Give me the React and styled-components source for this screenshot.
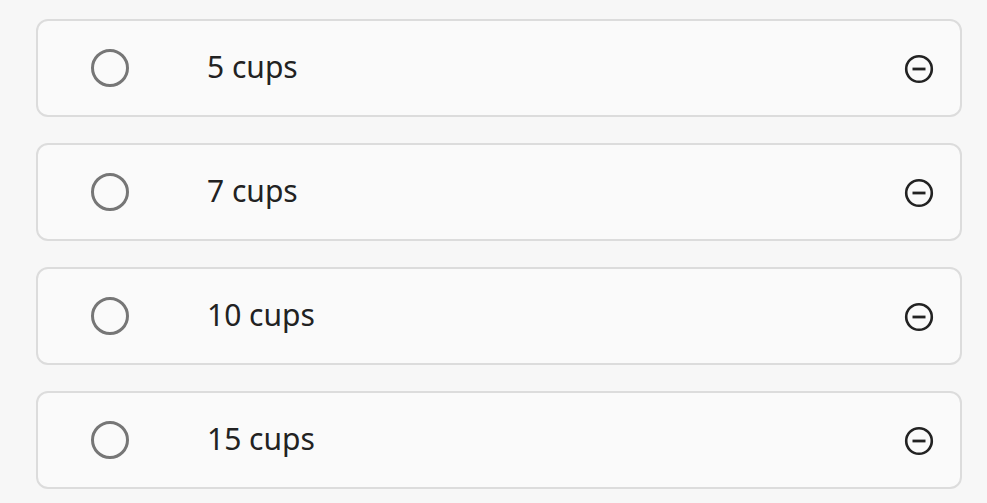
import React from 'react';
import styled, { createGlobalStyle } from 'styled-components';

const options = ['5 cups', '7 cups', '10 cups', '15 cups'];

const GlobalStyle = createGlobalStyle`
    body {
        margin: 0;
        background: #f7f7f7;
        font-family: "Noto Sans", "Open Sans", sans-serif;
    }
`;

const App = () => {
    return (
        <>
            <GlobalStyle />
            <List>
                {options.map(label => (
                    <Card key={label}>
                        <Radio />
                        <Label>{label}</Label>
                        <RemoveButton aria-label={`Remove ${label}`}>
                            <svg width="30" height="30" viewBox="0 0 30 30" fill="none">
                                <circle cx="15" cy="15" r="12.8" stroke="#222" strokeWidth="2.6" />
                                <line x1="8.5" y1="15" x2="21.5" y2="15" stroke="#222" strokeWidth="2.8" />
                            </svg>
                        </RemoveButton>
                    </Card>
                ))}
            </List>
        </>
    );
};

export default App;

const List = styled.div`
    display: flex;
    flex-direction: column;
    gap: 26px;
    padding: 19px 25px 0 36px;
`;

const Card = styled.div`
    height: 98px;
    box-sizing: border-box;
    display: flex;
    align-items: center;
    padding: 0 26px 0 53px;

    background: #fafafa;
    border: 2px solid #dcdcdc;
    border-radius: 12px;
`;

const Radio = styled.span`
    width: 38px;
    height: 38px;
    box-sizing: border-box;
    border: 3.5px solid #767676;
    border-radius: 50%;
    flex-shrink: 0;
`;

const Label = styled.span`
    flex: 1;
    margin-left: 78px;
    font-size: 30px;
    color: #222;
    line-height: 1;
    padding-bottom: 2px;
`;

const RemoveButton = styled.button`
    display: flex;
    padding: 0;
    margin-top: 2px;
    border: none;
    background: none;
`;
